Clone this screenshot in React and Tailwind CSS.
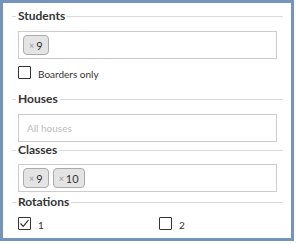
import React from 'react';

const Legend = ({ children, className = '' }) => (
    <div className={`flex items-center h-[14px] ${className}`}>
        <div className="w-[4px] h-px bg-[#d9d9d9]" />
        <span className="px-[2px] text-[12px] font-bold text-[#333] leading-none">{children}</span>
        <div className="flex-1 h-px bg-[#d9d9d9]" />
    </div>
);

const Tag = ({ label }) => (
    <div className="flex items-center h-[20px] px-[5px] gap-[2px] bg-[#e4e4e4] border border-[#aaa] rounded-[4px]">
        <span className="text-[9px] text-[#999] leading-none">×</span>
        <span className="text-[11px] text-[#333] leading-none">{label}</span>
    </div>
);

const Box = ({ children, className = '' }) => (
    <div className={`flex items-center gap-[4px] h-[28px] px-[4px] border border-[#ccc] bg-white ${className}`}>
        {children}
    </div>
);

const Check = ({ checked, label }) => (
    <label className="flex items-center gap-[7px]">
        <span className="w-[13px] h-[13px] border border-[#333] rounded-[1px] bg-white flex items-center justify-center">
            {checked && (
                <svg width="11" height="11" viewBox="0 0 11 11" fill="none">
                    <path d="M1.5 5.5 L4.2 8.3 L9.5 2.2" stroke="#333" strokeWidth="1.2" />
                </svg>
            )}
        </span>
        <span className="text-[10px] text-[#333] leading-none mt-[3px]">{label}</span>
    </label>
);

const App = () => {
    return (
        <div className="w-[294px] h-[241px] border-[3px] border-[#7394bb] bg-white pl-[9px] pr-[8px] pt-[6px] font-['Lato','Liberation_Sans',sans-serif]">
            <Legend>Students</Legend>
            <div className="px-[6px]">
                <Box className="mt-[8px]">
                    <Tag label="9" />
                </Box>
                <div className="mt-[7px]">
                    <Check label="Boarders only" />
                </div>
            </div>

            <Legend className="mt-[13px]">Houses</Legend>
            <div className="px-[6px]">
                <Box className="mt-[8px] px-[8px]">
                    <span className="text-[10px] text-[#bbb]">All houses</span>
                </Box>
            </div>

            <Legend className="mt-[1px]">Classes</Legend>
            <div className="px-[6px]">
                <Box className="mt-[7px]">
                    <Tag label="9" />
                    <Tag label="10" />
                </Box>
            </div>

            <Legend className="mt-[3px]">Rotations</Legend>
            <div className="px-[6px] mt-[8px] grid grid-cols-[141px_1fr]">
                <Check checked label="1" />
                <Check label="2" />
            </div>
        </div>
    );
};

export default App;
